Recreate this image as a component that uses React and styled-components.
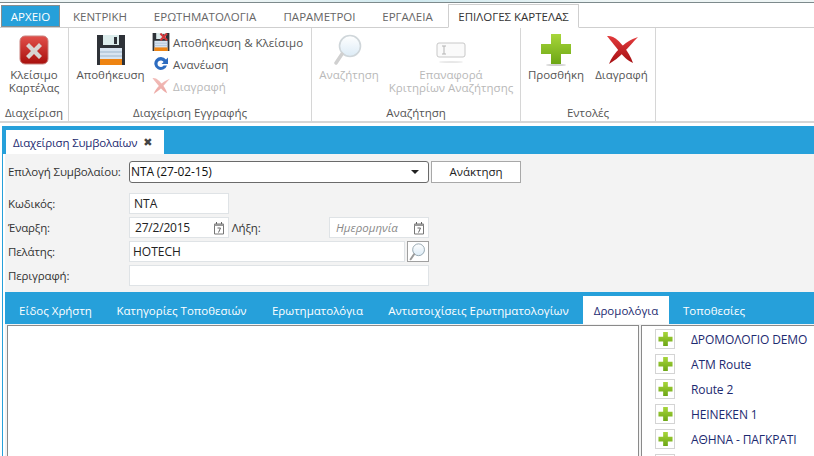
import React from 'react';
import styled, { createGlobalStyle } from 'styled-components';

const Global = createGlobalStyle`
  html, body { margin: 0; padding: 0; background: #fff; overflow: hidden; }
  body { width: 814px; height: 456px; font-family: "Open Sans", "Noto Sans", sans-serif; font-size: 11.5px; color: #444; }
  * { box-sizing: border-box; }
`;

const Page = styled.div`
  width: 814px; height: 456px; overflow: hidden; display: flex; flex-direction: column;
`;
const TopEdge = styled.div`
  height: 3px; flex: none; border-bottom: 1px solid #7d8a8c;
  background: linear-gradient(90deg, #eef5f5 0%, #eef5f5 30%, #cfe9ef 50%, #eef5f5 75%);
`;
const MenuBar = styled.div`
  height: 25px; flex: none; display: flex; align-items: flex-end; padding: 2px 0 0 1px; border-bottom: 1px solid #cfcfcf;
`;
const MenuTab = styled.div`
  height: ${p => (p.$boxed ? 24 : 22)}px; width: ${p => p.$w}px; margin-bottom: ${p => (p.$boxed ? -1 : 0)}px;
  margin-left: ${p => (p.$boxed ? 2 : 0)}px; flex: none;
  display: flex; align-items: center; justify-content: center; font-size: 11.5px; white-space: nowrap;
  color: ${p => (p.$file ? '#fff' : p.$boxed ? '#333' : '#666')};
  background: ${p => (p.$file ? '#26a0da' : '#fff')};
  border: ${p => (p.$file ? '1px solid #868e90' : p.$boxed ? '1px solid #cfcfcf' : '0')};
  border-bottom: ${p => (p.$boxed ? '1px solid #fff' : p.$file ? '1px solid #868e90' : '0')};
`;
const Ribbon = styled.div`
  height: 95px; flex: none; display: flex; border-bottom: 2px solid #d6d6d6;
`;
const Group = styled.div`
  width: ${p => p.$w}px; flex: none; display: flex; flex-direction: column; border-right: 1px solid #d6d6d6;
`;
const GroupBody = styled.div`
  height: 77px; display: flex;
`;
const GroupLabel = styled.div`
  height: 16px; text-align: center; line-height: 16px; font-size: 11.5px; color: #555; white-space: nowrap;
`;
const LargeButton = styled.div`
  width: ${p => p.$w}px; flex: none; display: flex; flex-direction: column; align-items: center; padding-top: 6px;
  color: ${p => (p.$off ? '#b9b9b9' : '#555')}; font-size: 11.5px; line-height: 13px; text-align: center; white-space: nowrap;
  svg { height: 32px; margin-bottom: 2px; flex: none; }
`;
const SmallColumn = styled.div`
  display: flex; flex-direction: column; padding-top: 5px; gap: 4px;
`;
const SmallButton = styled.div`
  height: 18px; display: flex; align-items: center; gap: 3px; white-space: nowrap;
  color: ${p => (p.$off ? '#b9b9b9' : '#555')}; font-size: 11.5px;
  svg { width: 18px; height: 18px; flex: none; }
`;
const Shell = styled.div`
  flex: 1; margin: 3px 0 0 2px; min-height: 0; display: flex; flex-direction: column;
  border-left: 1px solid #26a0da;
`;
const DocStrip = styled.div`
  height: 28px; flex: none; background: #26a0da; display: flex; align-items: flex-end; padding-left: 3px;
`;
const DocTab = styled.div`
  width: 158px; height: 24px; background: #fff; display: flex; align-items: center; gap: 6px; padding-left: 7px;
  color: #1d2a70; font-size: 11.5px; letter-spacing: -0.18px; white-space: nowrap;
`;
const CloseMark = styled.span`
  font-size: 11px; color: #444; font-weight: 700; font-family: "DejaVu Sans", sans-serif; line-height: 1;
`;
const Body = styled.div`
  flex: 1; min-height: 0; margin-left: 2px; background: #f3f3f3; display: flex; flex-direction: column;
`;
const Form = styled.div`
  height: 138px; flex: none; padding: 7px 0 0 3px; display: flex; flex-direction: column;
`;
const FormRow = styled.div`
  display: flex; align-items: center; height: 21px; margin-top: ${p => p.$mt || 0}px; margin-bottom: 3px;
`;
const Label = styled.div`
  width: ${p => p.$w || 121}px; flex: none; color: #333; font-size: 11.5px; letter-spacing: -0.15px; white-space: nowrap;
`;
const Select = styled.div`
  width: 300px; height: 22px; background: #fff; border: 1px solid #6a6a6a; border-radius: 3px; display: flex; align-items: center;
  justify-content: space-between; padding: 0 9px 0 1px; color: #111; font-size: 12px; letter-spacing: -0.12px;
`;
const Caret = styled.span`
  width: 0; height: 0; border-left: 4px solid transparent; border-right: 4px solid transparent; border-top: 4px solid #222;
`;
const Button = styled.div`
  width: 90px; height: 22px; margin-left: 2px; background: #fff; border: 1px solid #a8a8a8; display: flex; align-items: center; justify-content: center;
  color: #222; font-size: 11.5px;
`;
const Field = styled.div`
  width: ${p => p.$w}px; height: 21px; flex: none; background: #fff; border: 1px solid #dfe3e6; display: flex; align-items: center;
  justify-content: space-between; padding: 0 3px 0 ${p => p.$pl || 3}px; color: ${p => (p.$hint ? '#8a8a8a' : '#222')};
  font-style: ${p => (p.$hint ? 'italic' : 'normal')}; font-size: ${p => (p.$hint ? 11.5 : 12)}px;
  letter-spacing: ${p => (p.$tight ? -0.2 : 0)}px;
  svg { width: 12px; height: 14px; flex: none; }
`;
const SearchButton = styled.div`
  width: 22px; height: 21px; margin-left: 2px; flex: none; background: #fff; border: 1px solid #a0a0a0; display: flex; align-items: center; justify-content: center;
  svg { width: 18px; height: 18px; }
`;
const TabsStrip = styled.div`
  height: 32px; flex: none; background: #26a0da; display: flex; align-items: flex-end; padding-left: 4px;
`;
const InnerTab = styled.div`
  width: ${p => p.$w}px; height: 28px; flex: none; display: flex; align-items: center; justify-content: center; white-space: nowrap;
  background: ${p => (p.$active ? '#fff' : 'transparent')}; color: ${p => (p.$active ? '#1d2a70' : '#fff')};
  font-size: 11.5px;
`;
const Panes = styled.div`
  flex: 1; min-height: 0; display: flex; margin: 1px 0 0 2px; gap: 2px;
`;
const LeftPane = styled.div`
  width: 632px; background: #fff; border: 1px solid #8a8a8a; border-bottom: 0;
`;
const RightPane = styled.div`
  flex: 1; background: #fff; border-left: 1px solid #8a8a8a; border-top: 1px solid #8a8a8a; padding: 3px 0 0 13px; display: flex; flex-direction: column; gap: 5px;
  overflow: hidden;
`;
const RouteRow = styled.div`
  height: 20px; flex: none; display: flex; align-items: center; gap: 16px; color: #1d2a70; font-size: 12px; letter-spacing: -0.1px; white-space: nowrap;
`;
const AddBox = styled.div`
  width: 20px; height: 20px; flex: none; background: #fff; border: 1px solid #d4d4d4; display: flex; align-items: center; justify-content: center;
  svg { width: 15px; height: 15px; margin: 0; }
`;

const CloseIcon = () => (
  <svg viewBox="0 0 30 30" width="30">
    <defs><linearGradient id="cr" x1="0" y1="0" x2="0" y2="1"><stop offset="0" stopColor="#e2504b" /><stop offset="1" stopColor="#a80f0c" /></linearGradient></defs>
    <rect x="1" y="1" width="28" height="28" rx="5" fill="url(#cr)" stroke="#c9837f" />
    <path d="M10 8 15 13 20 8 23 11 18 16 23 21 20 24 15 19 10 24 7 21 12 16 7 11Z" fill="#d8d4d2" />
  </svg>
);
const Floppy = ({ small }) => (
  <svg viewBox="0 0 28 30" width="28">
    <path d="M0 0H28V30H0Z" fill="#2e3238" />
    <rect x="6" y="0" width="16" height="10" fill="#dcecec" />
    <rect x="17" y="2" width="3" height="7" fill="#2e3238" />
    <rect x="3" y="13" width="22" height="17" fill="#d8e4f0" />
    <path d="M3 17H25M3 21H25" stroke="#9db6cc" strokeWidth="1" />
    <rect x="3" y="24" width="22" height="6" fill="#ee8412" />
    {small && <path d="M13 1 24 12M24 1 13 12" stroke="#d6373a" strokeWidth="3.5" />}
  </svg>
);
const RefreshIcon = () => (
  <svg viewBox="0 0 18 18">
    <path d="M14 4.5A6.5 6.5 0 1 0 15 10.5H11.6A3.3 3.3 0 1 1 11.6 7L9.5 9H16V2.5Z" fill="#2d6cc0" />
  </svg>
);
const RedX = ({ faded, id }) => (
  <svg viewBox="0 0 32 32" width="32">
    <defs><linearGradient id={id} x1="0" y1="0" x2="0" y2="1"><stop offset="0" stopColor={faded ? '#f2bdb9' : '#e23a3c'} /><stop offset="1" stopColor={faded ? '#eca8a4' : '#a50f12'} /></linearGradient></defs>
    <path d="M32 3C25 5 18 10 14 14C9 19 5 24 3 30C8 27 13 23 17 19C23 13 27 8 32 3Z" fill={`url(#${id})`} />
    <path d="M1 2C8 1 14 8 18 13C22 18 25 23 27 29C22 27 17 22 13 17C9 12 5 7 1 2Z" fill={`url(#${id})`} />
  </svg>
);
const Lens = ({ faded, id = 'lf' }) => (
  <svg viewBox="0 0 30 32" width="30">
    <defs><linearGradient id={id} x1="0" y1="0" x2="0" y2="1"><stop offset="0" stopColor="#fff" /><stop offset="1" stopColor="#dcebf6" /></linearGradient></defs>
    <circle cx="16" cy="12" r="10.5" fill={`url(#${id})`} stroke={faded ? '#cfd6da' : '#8fa2ac'} strokeWidth="1.6" />
    <path d="M8 20 2 29" stroke={faded ? '#d0d0d0' : '#9a9a9a'} strokeWidth="3.5" strokeLinecap="round" />
  </svg>
);
const ResetIcon = () => (
  <svg viewBox="0 0 32 32" width="32">
    <rect x="2" y="9" width="28" height="14" rx="2" fill="#fafafa" stroke="#c8c8c8" />
    <path d="M7 12H11M9 12V20M7 20H11" stroke="#b4b4b4" fill="none" />
    <ellipse cx="16" cy="28" rx="12" ry="1" fill="#e8e8e8" />
  </svg>
);
const Plus = ({ shadow }) => (
  <svg viewBox="0 0 32 32" width="32">
    <defs><linearGradient id="pg" x1="0" y1="0" x2="0" y2="1"><stop offset="0" stopColor="#a8d63a" /><stop offset="1" stopColor="#6ca615" /></linearGradient></defs>
    {shadow && <ellipse cx="16" cy="31" rx="10" ry="1" fill="#cfcfcf" />}
    <path d="M11 0H21V10H31V20H21V30H11V20H1V10H11Z" fill="url(#pg)" />
  </svg>
);
const Calendar = () => (
  <svg viewBox="0 0 12 14">
    <path d="M1.5 3H10.5V13H1.5Z" fill="#fff" stroke="#777" />
    <path d="M1.5 3H10.5V5H1.5Z" fill="#999" />
    <path d="M3.5 1V3M8.5 1V3" stroke="#666" />
    <path d="M4.5 7H7.5L5.5 11.5" fill="none" stroke="#666" />
  </svg>
);

const routes = ['ΔΡΟΜΟΛΟΓΙΟ DEMO', 'ATM Route', 'Route 2', 'HEINEKEN 1', 'ΑΘΗΝΑ - ΠΑΓΚΡΑΤΙ', ''];
const innerTabs = [
  ['Είδος Χρήστη', 93], ['Κατηγορίες Τοποθεσιών', 159], ['Ερωτηματολόγια', 113],
  ['Αντιστοιχίσεις Ερωτηματολογίων', 209], ['Δρομολόγια', 86, true], ['Τοποθεσίες', 90],
];

export default function App() {
  return (
    <Page>
      <Global />
      <TopEdge />
      <MenuBar>
        <MenuTab $file $w={59}>ΑΡΧΕΙΟ</MenuTab>
        <MenuTab $w={80}>ΚΕΝΤΡΙΚΗ</MenuTab>
        <MenuTab $w={130}>ΕΡΩΤΗΜΑΤΟΛΟΓΙΑ</MenuTab>
        <MenuTab $w={99}>ΠΑΡΑΜΕΤΡΟΙ</MenuTab>
        <MenuTab $w={77}>ΕΡΓΑΛΕΙΑ</MenuTab>
        <MenuTab $boxed $w={131}>ΕΠΙΛΟΓΕΣ ΚΑΡΤΕΛΑΣ</MenuTab>
      </MenuBar>
      <Ribbon>
        <Group $w={69}>
          <GroupBody>
            <LargeButton $w={68}><CloseIcon />Κλείσιμο<br />Καρτέλας</LargeButton>
          </GroupBody>
          <GroupLabel>Διαχείριση</GroupLabel>
        </Group>
        <Group $w={243}>
          <GroupBody>
            <LargeButton $w={83}><Floppy />Αποθήκευση</LargeButton>
            <SmallColumn>
              <SmallButton><Floppy small />Αποθήκευση &amp; Κλείσιμο</SmallButton>
              <SmallButton><RefreshIcon />Ανανέωση</SmallButton>
              <SmallButton $off><RedX faded id="xs" />Διαγραφή</SmallButton>
            </SmallColumn>
          </GroupBody>
          <GroupLabel>Διαχείριση Εγγραφής</GroupLabel>
        </Group>
        <Group $w={209}>
          <GroupBody>
            <LargeButton $off $w={74}><Lens faded id="l1" />Αναζήτηση</LargeButton>
            <LargeButton $off $w={130}><ResetIcon />Επαναφορά<br />Κριτηρίων Αναζήτησης</LargeButton>
          </GroupBody>
          <GroupLabel>Αναζήτηση</GroupLabel>
        </Group>
        <Group $w={135}>
          <GroupBody>
            <LargeButton $w={70}><Plus shadow />Προσθήκη</LargeButton>
            <LargeButton $w={61}><RedX id="xl" />Διαγραφή</LargeButton>
          </GroupBody>
          <GroupLabel>Εντολές</GroupLabel>
        </Group>
      </Ribbon>
      <Shell>
        <DocStrip>
          <DocTab>Διαχείριση Συμβολαίων<CloseMark>✖</CloseMark></DocTab>
        </DocStrip>
        <Body>
          <Form>
            <FormRow>
              <Label>Επιλογή Συμβολαίου:</Label>
              <Select>NTA (27-02-15)<Caret /></Select>
              <Button>Ανάκτηση</Button>
            </FormRow>
            <FormRow $mt={8}>
              <Label>Κωδικός:</Label>
              <Field $w={100} $pl={4}>NTA</Field>
            </FormRow>
            <FormRow>
              <Label>Έναρξη:</Label>
              <Field $w={100} $pl={5} $tight>27/2/2015<Calendar /></Field>
              <Label $w={100}>&nbsp;Λήξη:</Label>
              <Field $w={100} $pl={6} $hint>Ημερομηνία<Calendar /></Field>
            </FormRow>
            <FormRow>
              <Label>Πελάτης:</Label>
              <Field $w={276}>HOTECH</Field>
              <SearchButton><Lens id="l2" /></SearchButton>
            </FormRow>
            <FormRow>
              <Label>Περιγραφή:</Label>
              <Field $w={300} />
            </FormRow>
          </Form>
          <TabsStrip>
            {innerTabs.map(([t, w, a]) => <InnerTab key={t} $w={w} $active={a}>{t}</InnerTab>)}
          </TabsStrip>
          <Panes>
            <LeftPane />
            <RightPane>
              {routes.map((r, i) => (
                <RouteRow key={i}><AddBox><Plus /></AddBox>{r}</RouteRow>
              ))}
            </RightPane>
          </Panes>
        </Body>
      </Shell>
    </Page>
  );
}
